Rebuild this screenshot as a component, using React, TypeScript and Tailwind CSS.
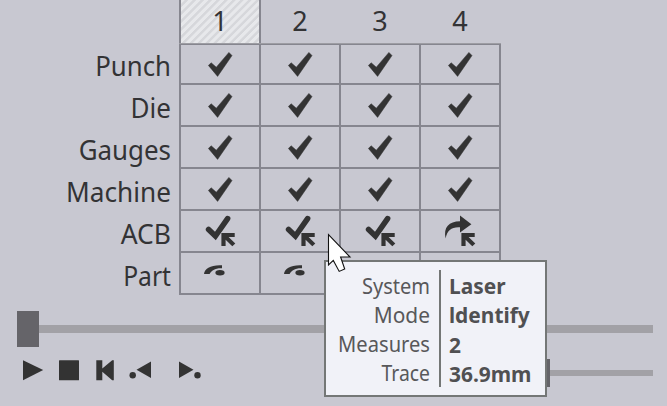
import React from 'react';

type Kind = 'check' | 'manual' | 'redo' | 'part' | 'none';

const rows: { label: string; fit: string; height: string; cells: Kind[] }[] = [
  { label: 'Punch', fit: 'scale-x-[0.92]', height: 'h-10', cells: ['check', 'check', 'check', 'check'] },
  { label: 'Die', fit: 'scale-x-[0.93]', height: 'h-[42px]', cells: ['check', 'check', 'check', 'check'] },
  { label: 'Gauges', fit: 'scale-x-[0.925]', height: 'h-[42px]', cells: ['check', 'check', 'check', 'check'] },
  { label: 'Machine', fit: 'scale-x-[0.935]', height: 'h-[42px]', cells: ['check', 'check', 'check', 'check'] },
  { label: 'ACB', fit: 'scale-x-[0.945]', height: 'h-[42px]', cells: ['manual', 'manual', 'manual', 'redo'] },
  { label: 'Part', fit: 'scale-x-[0.88]', height: 'h-[42px]', cells: ['part', 'part', 'none', 'none'] },
];

const details: { name: string; fit: string; value: React.ReactNode }[] = [
  { name: 'System', fit: 'scale-x-[0.91]', value: 'Laser' },
  { name: 'Mode', fit: 'scale-x-[0.95]', value: <><span className="font-['Roboto',sans-serif]">I</span>dentify</> },
  { name: 'Measures', fit: 'scale-x-[0.915]', value: '2' },
  { name: 'Trace', fit: 'scale-x-[0.88]', value: '36.9mm' },
];

function CellIcon({ kind }: { kind: Kind }) {
  return (
    <svg width="78" height="40" viewBox="0 0 78 40" className="shrink-0" fill="#333333">
      {kind === 'check' && (
        <path d="M27.4 21.4 30.2 18.8 35.3 23.2 47.9 8.4 51 11.6 36.6 32.4Z" stroke="#333333" strokeWidth=".5" strokeLinejoin="round" />
      )}
      {kind === 'manual' && (
        <path d="M27.6 18.4 34.4 25 46.6 7.6" fill="none" stroke="#333333" strokeWidth="5.6" strokeLinecap="round" strokeLinejoin="miter" />
      )}
      {kind === 'redo' && (
        <path d="M24.6 27.6C22.2 16 28 10.4 39 10.2V4.6L50.4 13.2 39 21.6V16.2C31 15.6 26 19 24.6 27.6Z" />
      )}
      {(kind === 'manual' || kind === 'redo') && (
        <path
          d="M40.4 22H53.7V25.9H47.6L54.3 32.4 51.3 35.3 44.6 28.7V35H40.4Z"
          stroke="#c8c8d1"
          strokeWidth="1"
          paintOrder="stroke"
        />
      )}
      {kind === 'part' && (
        <g>
          <path d="M23 21C23.5 15.4 30 11.6 41 12.2V15.3C34 15 30.5 17.6 28.6 21Z" />
          <ellipse cx="39" cy="19.8" rx="4.6" ry="2.7" />
        </g>
      )}
    </svg>
  );
}

export default function App() {
  return (
    <div className="relative h-[406px] w-[667px] overflow-hidden bg-[#c8c8d1] font-['Noto_Sans','Open_Sans',sans-serif] text-[#333335]">
      <div className="flex h-[295px]">
        <div className="flex w-[171px] flex-col pt-11 text-right text-[28px] leading-[42px]">
          {rows.map((r) => (
            <div key={r.label} className={`h-[42px] origin-right ${r.fit}`}>{r.label}</div>
          ))}
        </div>
        <div className="ml-2 w-[322px]">
          <div className="flex h-11 border-b border-[#9d9da3] text-center text-[27px] leading-[41px]">
            <div className="w-[82px] border-x-2 border-[#86868f] bg-[repeating-linear-gradient(135deg,#e7e8eb_0px,#e7e8eb_2.4px,#d6d7db_3.1px,#d6d7db_4.9px,#e7e8eb_5.6px)]">1</div>
            <div className="w-[78px]">2</div>
            <div className="w-[82px]">3</div>
            <div className="w-[78px]">4</div>
          </div>
          <div className="border-l-2 border-t border-[#86868f]">
            {rows.map((r) => (
              <div key={r.label} className={`flex ${r.height}`}>
                {r.cells.map((kind, i) => (
                  <div key={i} className="flex w-20 items-center justify-center overflow-hidden border-b-2 border-r-2 border-[#86868f]">
                    <CellIcon kind={kind} />
                  </div>
                ))}
              </div>
            ))}
          </div>
        </div>
      </div>
      <div className="mt-4 flex h-9 w-[653px] items-center pl-[17px]">
        <div className="h-9 w-[22px] bg-[#656469]" />
        <div className="h-2 flex-1 bg-[#a2a1a6]" />
      </div>
      <div className="mt-3 flex h-7 w-[653px] items-center">
        <svg width="220" height="28" viewBox="0 0 220 28" fill="#333333">
          <path d="M23 1.2 43.2 11 23 21.2Z" />
          <rect x="59" y="1.2" width="20" height="20" rx=".5" />
          <path d="M96.3 1.2H102.3V9.4L112.2 1.2H113.8V21.2H112.2L102.3 12.8V21.2H96.3Z" />
          <path d="M151 2.5V19L136.5 10.8ZM179 2.5V19L193.5 10.8Z" />
          <circle cx="132.7" cy="16.2" r="3.2" />
          <circle cx="197.5" cy="16.2" r="3.2" />
        </svg>
        <div className="ml-[308px] h-7 w-[22px] bg-[#656469]" />
        <div className="h-1.5 flex-1 bg-[#a2a1a6]" />
      </div>

      <div className="absolute left-[324px] top-[260px] flex h-[137px] w-[223px] border-2 border-[#747776] bg-[#f1f2f8] pt-2 text-[22px] leading-[29px] text-[#58585a]">
        <div className="w-[104px] pt-px text-right">
          {details.map((d) => (
            <div key={d.name} className={`origin-right ${d.fit}`}>{d.name}</div>
          ))}
        </div>
        <div className="ml-[9px] h-[117px] w-0.5 shrink-0 bg-[#747776]" />
        <div className="ml-2 pt-px font-bold text-[#505052]">
          {details.map((d) => (
            <div key={d.name} className="origin-left scale-x-[0.95]">{d.value}</div>
          ))}
        </div>
      </div>
      <svg className="absolute left-[326px] top-[232px]" width="28" height="42" viewBox="0 0 28 42">
        <path d="M2.5 2.5V33L7.3 28.4 13.2 39.4 18.7 37 14.6 25H24Z" fill="#fff" stroke="#111" strokeWidth="1.1" />
      </svg>
    </div>
  );
}
